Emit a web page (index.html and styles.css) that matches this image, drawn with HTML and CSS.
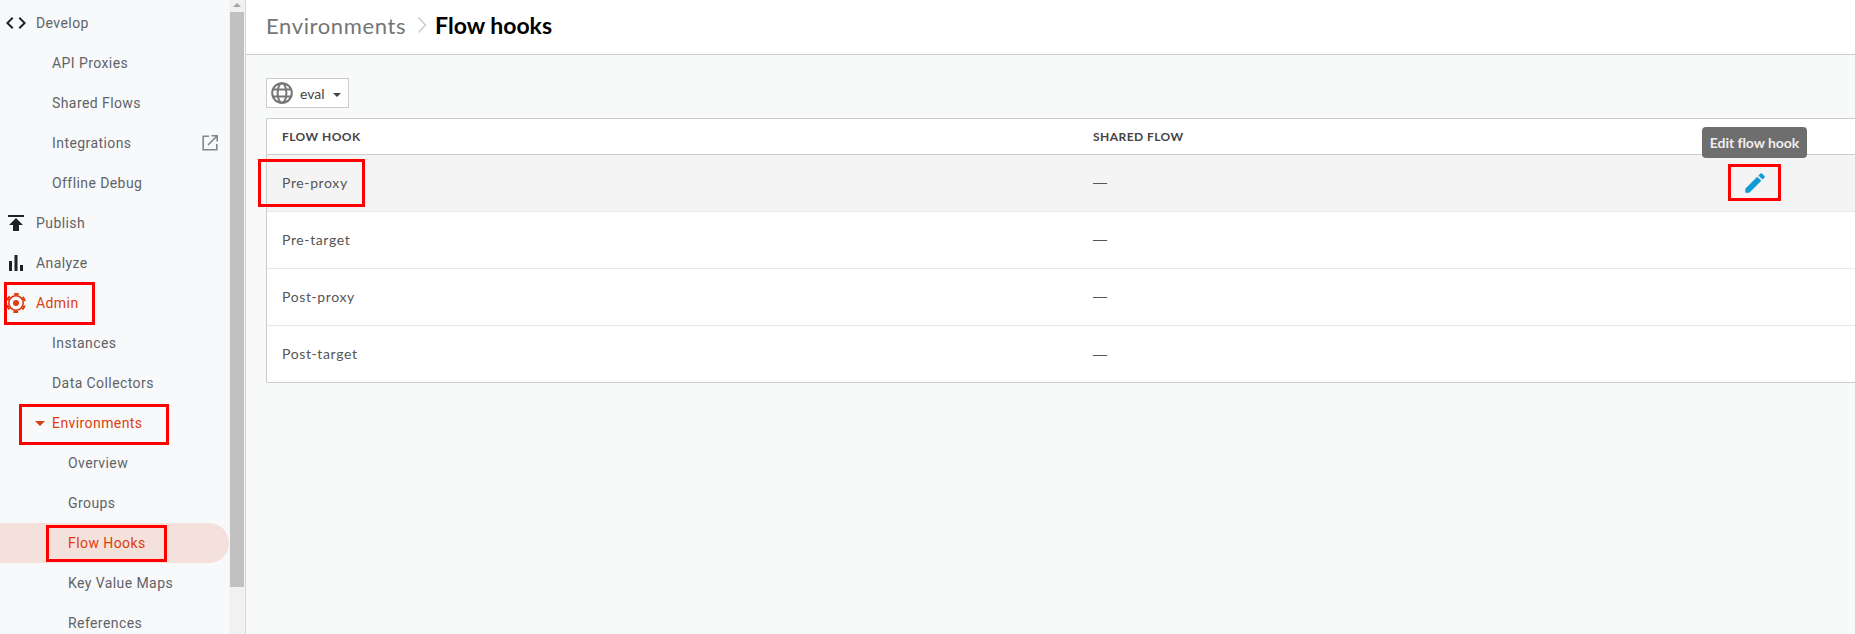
FILE: index.html
```html
<!DOCTYPE html>
<html lang="en">
<head>
<meta charset="utf-8">
<title>Flow hooks</title>
<link rel="stylesheet" href="styles.css">
</head>
<body>
<div class="app">
  <nav class="sidebar">
    <div class="nav-list">
      <div class="row top">
        <svg class="ico" viewBox="0 0 24 24"><path class="dark" d="M9.4 16.6 4.8 12l4.6-4.6L8 6l-6 6 6 6zm5.2 0 4.6-4.6-4.6-4.6L16 6l6 6-6 6z"/></svg>
        <span>Develop</span>
      </div>
      <div class="row l2"><span>API Proxies</span></div>
      <div class="row l2"><span>Shared Flows</span></div>
      <div class="row l2 between">
        <span>Integrations</span>
        <svg class="ext" viewBox="0 0 18 18"><path d="M8 2.2H2.2v13.6h13.6V10" fill="none" stroke="#80868b" stroke-width="1.6"/><path d="M7 11 15.5 2.5M10.5 1.8h5.7v5.7" fill="none" stroke="#80868b" stroke-width="1.6"/></svg>
      </div>
      <div class="row l2"><span>Offline Debug</span></div>
      <div class="row top">
        <svg class="ico" viewBox="0 0 24 24"><path class="dark" d="M4 4v2h16V4zM5 14h4v6h6v-6h4l-7-7z"/></svg>
        <span>Publish</span>
      </div>
      <div class="row top">
        <svg class="ico" viewBox="0 0 24 24"><path class="dark" d="M5 10h3v10H5zM10.5 4h3v16h-3zM16 14h3v6h-3z"/></svg>
        <span>Analyze</span>
      </div>
      <div class="row top active">
        <svg class="ico" viewBox="0 0 24 24">
          <g fill="none" stroke="#dc3d0f">
            <circle cx="12" cy="12" r="7.2" stroke-width="1.6"/>
            <circle cx="12" cy="12" r="9" stroke-width="2.2" stroke-dasharray="4.7 4.72" transform="rotate(16 12 12)"/>
          </g>
          <circle class="orange" cx="12" cy="12" r="3"/>
        </svg>
        <span>Admin</span>
      </div>
      <div class="row l2"><span>Instances</span></div>
      <div class="row l2"><span>Data Collectors</span></div>
      <div class="row l2 active caret-row"><i class="caret"></i><span>Environments</span></div>
      <div class="row l3"><span>Overview</span></div>
      <div class="row l3"><span>Groups</span></div>
      <div class="row l3 active selected"><span>Flow Hooks</span></div>
      <div class="row l3"><span>Key Value Maps</span></div>
      <div class="row l3"><span>References</span></div>
    </div>
  </nav>
  <div class="scrollbar">
    <i class="scroll-up"></i>
    <div class="thumb"></div>
  </div>
  <main class="main">
    <header class="header">
      <span class="crumb">Environments</span>
      <svg class="chev" viewBox="0 0 10 18"><path d="M1.5 1.5 8.5 9l-7 7.5" fill="none" stroke="#c4c7c9" stroke-width="1.2"/></svg>
      <h1 class="title">Flow hooks</h1>
    </header>
    <section class="content">
      <div class="env-select">
        <svg class="globe" viewBox="0 0 22 22"><g fill="none" stroke="#757575" stroke-width="2"><circle cx="11" cy="11" r="9.8"/><ellipse cx="11" cy="11" rx="4.4" ry="9.8"/><path d="M2 7.6h18M2 14.4h18"/></g></svg>
        <span>eval</span>
        <i class="select-caret"></i>
      </div>
      <div class="table">
        <div class="tr head">
          <div class="c1">FLOW HOOK</div>
          <div class="c2">SHARED FLOW</div>
        </div>
        <div class="tr body hover">
          <div class="c1">Pre-proxy</div>
          <div class="c2">—</div>
          <div class="c3">
            <svg class="pencil" viewBox="0 0 24 24"><path d="M3 17.25V21h3.75L17.81 9.94l-3.75-3.75zM20.71 7.04a1 1 0 0 0 0-1.41l-2.34-2.34a1 1 0 0 0-1.41 0l-1.83 1.83 3.75 3.75z"/></svg>
            <div class="tooltip">Edit flow hook</div>
          </div>
        </div>
        <div class="tr body"><div class="c1">Pre-target</div><div class="c2">—</div></div>
        <div class="tr body"><div class="c1">Post-proxy</div><div class="c2">—</div></div>
        <div class="tr body last"><div class="c1">Post-target</div><div class="c2">—</div></div>
      </div>
    </section>
  </main>
</div>
<div class="mark mark-admin"></div>
<div class="mark mark-env"></div>
<div class="mark mark-flow"></div>
<div class="mark mark-pre"></div>
<div class="mark mark-edit"></div>
</body>
</html>
```

FILE: styles.css
```css
* { box-sizing: border-box; }
html, body { margin: 0; height: 100%; overflow: hidden; }
body { background: #f8f9f9; font-family: Roboto, "Liberation Sans", sans-serif; }

.app { display: flex; height: 634px; }

.sidebar { width: 229px; flex: none; background: #f8f9fa; overflow: hidden; padding-top: 3px; }
.row {
  display: flex; align-items: center; height: 40px;
  font-size: 14px; letter-spacing: .42px; color: #5f6368; white-space: nowrap;
}
.row.top { padding-left: 36px; position: relative; }
.row.l2 { padding-left: 52px; }
.row.l3 { padding-left: 68px; }
.row.between { justify-content: space-between; padding-right: 10px; }
.row.active { color: #dc3d0f; }
.row.selected { background: #f5e1dc; border-radius: 0 20px 20px 0; }
.caret-row { position: relative; }
.caret { position: absolute; left: 35px; top: 18px; width: 0; height: 0; border-left: 5px solid transparent; border-right: 5px solid transparent; border-top: 5px solid #d1410c; }
.ico { position: absolute; left: 4px; top: 8px; width: 24px; height: 24px; }
.dark { fill: #202124; }
.orange { fill: #dc3d0f; }
.ext { width: 18px; height: 18px; }

.scrollbar { width: 16px; flex: none; background: #f1f1f1; border-left: 1px solid #f4f4f4; border-right: 1px solid #f4f4f4; position: relative; }
.scroll-up { display: block; margin: 3px auto 0; width: 0; height: 0; border-left: 4px solid transparent; border-right: 4px solid transparent; border-bottom: 4px solid #a3a3a3; }
.thumb { width: 14px; height: 575px; margin-top: 5px; background: #c1c1c1; }

.main { flex: 1; min-width: 0; border-left: 1px solid #d6d6d6; display: flex; flex-direction: column; font-family: Lato, "Liberation Sans", sans-serif; }
.header { height: 55px; flex: none; background: #fff; border-bottom: 1px solid #ccc; display: flex; align-items: center; padding: 0 0 4px 20px; }
.crumb { font-size: 22px; color: #757575; letter-spacing: .62px; }
.chev { width: 10px; height: 18px; margin: 0 8px 0 11px; }
.title { margin: 0; font-size: 23px; font-weight: 700; color: #000; }

.content { flex: 1; padding: 23px 0 0 20px; background: #f8f9f9; }
.env-select { width: 83px; height: 30px; background: #fff; border: 1px solid #ccc; display: flex; align-items: center; padding-left: 4px; font-size: 14px; color: #444; }
.globe { width: 22px; height: 22px; margin-right: 7px; }
.select-caret { width: 0; height: 0; margin-left: 8px; margin-top: 3px; border-left: 4px solid transparent; border-right: 4px solid transparent; border-top: 4px solid #444; }

.table { margin-top: 10px; background: #fff; border: 1px solid #ccc; border-right: 0; border-radius: 2px 0 0 2px; height: 265px; }
.tr { display: grid; grid-template-columns: 811px 1fr; align-items: center; padding-left: 15px; position: relative; }
.head { height: 36px; border-bottom: 1px solid #ccc; font-size: 12px; font-weight: 700; letter-spacing: .45px; color: #444; }
.body { height: 57px; border-bottom: 1px solid #e8e8e8; font-size: 14px; letter-spacing: .62px; color: #555; padding-bottom: 2px; }
.body .c2 { font-family: "Liberation Sans", sans-serif; letter-spacing: 0; }
.last { border-bottom: 0; }
.hover { background: #f4f4f4; }
.c2 { color: #555; }
.head .c2 { color: #444; }
.c3 { position: absolute; left: 1461px; top: 0; height: 100%; width: 53px; display: flex; justify-content: center; align-items: center; }
.pencil { width: 26px; height: 26px; fill: #0f9bd6; }
.tooltip { position: absolute; left: -26px; top: -28px; width: 105px; height: 31px; border-radius: 4px; background: #6e6e6e; color: #eee; font-size: 14px; font-weight: 700; letter-spacing: -.05px; display: flex; align-items: center; justify-content: center; white-space: nowrap; }

.mark { position: absolute; border: 3px solid #f00; }
.mark-admin { left: 4px; top: 282px; width: 91px; height: 43px; }
.mark-env { left: 19px; top: 404px; width: 150px; height: 41px; }
.mark-flow { left: 46px; top: 525px; width: 121px; height: 37px; }
.mark-pre { left: 258px; top: 159px; width: 107px; height: 48px; }
.mark-edit { left: 1728px; top: 164px; width: 53px; height: 37px; }
```
